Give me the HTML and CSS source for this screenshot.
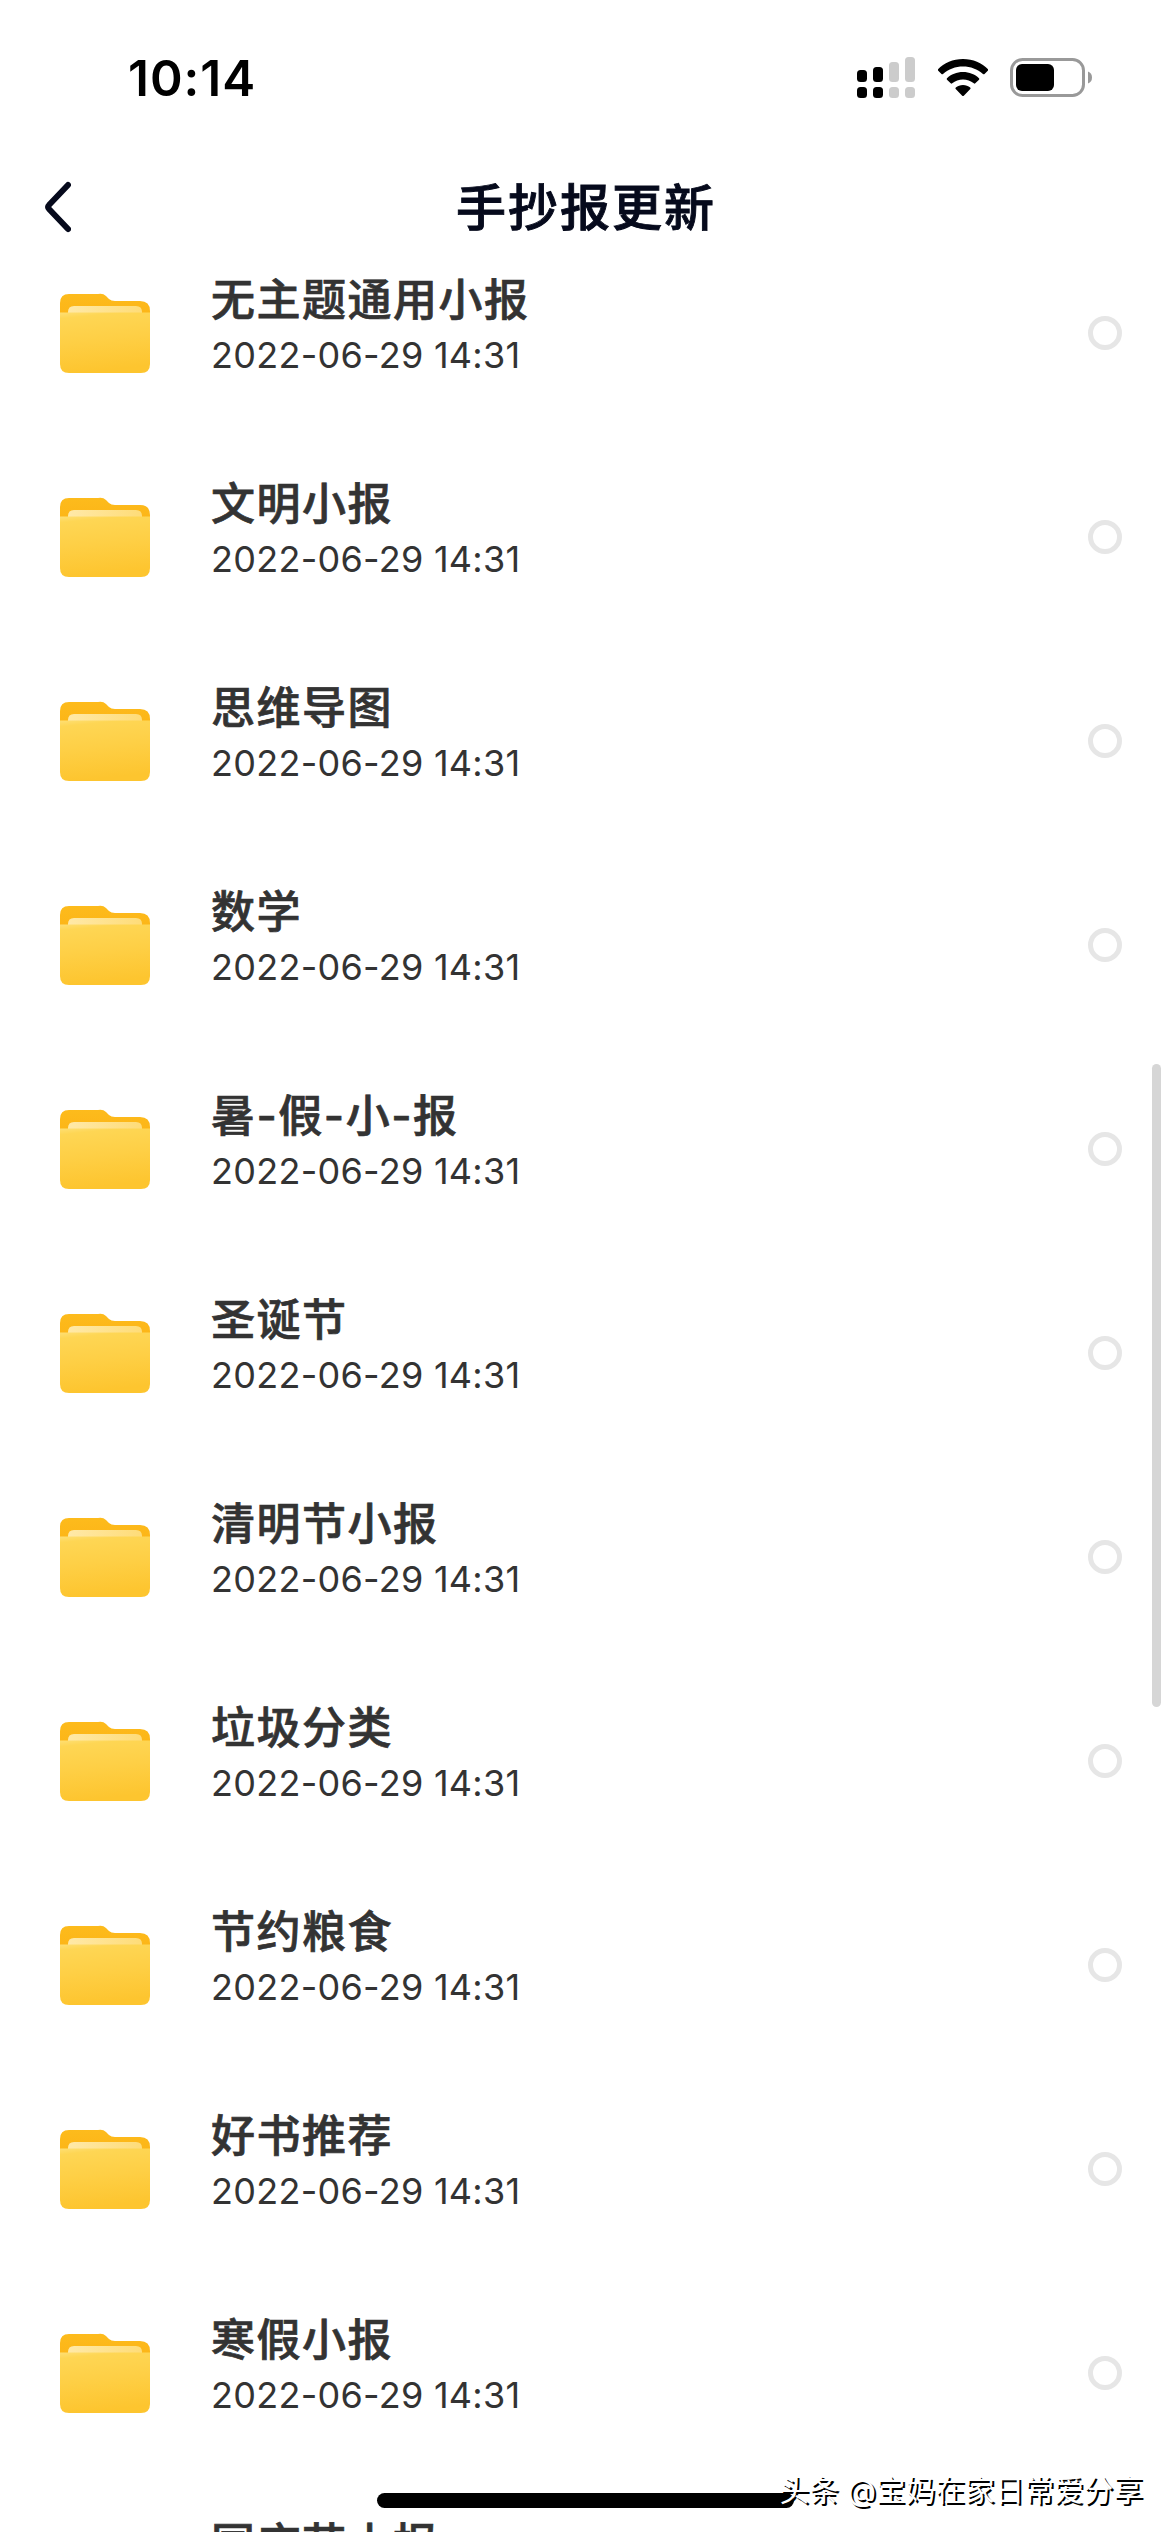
FILE: index.html
```html
<!DOCTYPE html>
<html lang="zh-cn">

<head>
    <meta charset="UTF-8">
    <meta name="viewport" content="width=device-width, initial-scale=1.0">
    <title>手抄报更新</title>
    <link rel="stylesheet" href="styles.css">
</head>

<body>

    <!-- 文件夹图标 -->
    <svg class="defs" width="0" height="0">
        <defs>
            <linearGradient id="back" x1="0" y1="0" x2="0" y2="1">
                <stop offset="0" stop-color="#fdbb1c" />
                <stop offset="1" stop-color="#fcb316" />
            </linearGradient>
            <linearGradient id="paper" x1="0" y1="0" x2="1" y2="0">
                <stop offset="0" stop-color="#ffe9a8" />
                <stop offset="1" stop-color="#fedc78" />
            </linearGradient>
            <linearGradient id="front" x1="0" y1="0" x2="0.15" y2="1">
                <stop offset="0" stop-color="#fedf74" />
                <stop offset="0.1" stop-color="#fed654" />
                <stop offset="0.5" stop-color="#fecf45" />
                <stop offset="1" stop-color="#fdc52f" />
            </linearGradient>
            <symbol id="folder" viewBox="0 0 90 80">
                <path fill="url(#back)" d="M0 30V10Q0 1 9 1H38Q43 0 46 3L49 6Q51 8 55 8H80Q90 8 90 18V30Z" />
                <path fill="url(#paper)" d="M8 30V19Q8 13 14 13H76Q82 13 82 19V30Z" />
                <path fill="url(#front)" d="M0 19.500H90V71Q90 80 81 80H9Q0 80 0 71Z" />
            </symbol>
        </defs>
    </svg>

    <div class="status">
        <span class="time">10:14</span>
        <div class="status-icons">
            <svg class="signal" width="60" height="42" viewBox="0 0 60 42">
                <rect x="0" y="13" width="10" height="12" rx="3.500" />
                <rect x="16" y="10" width="10" height="15" rx="3.500" />
                <rect x="0" y="30" width="10" height="11" rx="3.500" />
                <rect x="16" y="30" width="10" height="11" rx="3.500" />
                <g fill="#ccc">
                    <rect x="32" y="5" width="10" height="20" rx="3.500" />
                    <rect x="48" y="0" width="10" height="25" rx="3.500" />
                    <rect x="32" y="30" width="10" height="11" rx="3.500" />
                    <rect x="48" y="30" width="10" height="11" rx="3.500" />
                </g>
            </svg>
            <svg class="wifi" width="50" height="38" viewBox="0 0 50 38">
                <path d="M25 0C35 0 44 4 50 10.300Q50.500 11 50 11.600L46.500 15Q45.800 15.600 45 15C39.500 10 32.500 7.400 25 7.400S10.500 10 5 15Q4.200 15.600 3.500 15L0 11.600Q-.5 11 0 10.300C6 4 15 0 25 0Z" />
                <path d="M25 13C31.300 13 37 15.300 41 19.200Q41.700 20 41 20.700L37.300 24.300Q36.500 25 35.800 24.300C32.800 21.800 29 20.500 25 20.500S17.200 21.800 14.200 24.300Q13.500 25 12.700 24.300L9 20.700Q8.300 20 9 19.200C13 15.300 18.700 13 25 13Z" />
                <path d="M25 26C27.800 26 30.300 27 32.200 28.600Q33 29.300 32.300 30L25.800 36.700Q25 37.500 24.200 36.700L17.700 30Q17 29.300 17.800 28.600C19.700 27 22.200 26 25 26Z" />
            </svg>
            <svg class="battery" width="82" height="39" viewBox="0 0 82 39">
                <rect x="1.500" y="1.500" width="72" height="36" rx="11" fill="none" stroke="#999" stroke-width="3" />
                <rect x="6" y="6" width="38" height="27" rx="6" />
                <path fill="#999" d="M78 13.500Q82 15 82 19.500T78 25.500Z" />
            </svg>
        </div>
    </div>

    <div class="nav">
        <svg class="back" width="28" height="52" viewBox="0 0 28 52">
            <path d="M25 4L6 24Q4 26 6 28L25 48" />
        </svg>
        <h1>手抄报更新</h1>
    </div>

    <ul class="list"></ul>

    <div class="scrollbar"></div>
    <div class="home"></div>
    <div class="mark">头条 @宝妈在家日常爱分享</div>

    <script>
        var names = [
            "无主题通用小报",
            "文明小报",
            "思维导图",
            "数学",
            "暑-假-小-报",
            "圣诞节",
            "清明节小报",
            "垃圾分类",
            "节约粮食",
            "好书推荐",
            "寒假小报",
            "国庆节小报"
        ];

        // 渲染列表
        document.querySelector(".list").innerHTML = names.map(function (name) {
            return `<li>
                <svg class="folder" width="90" height="80"><use href="#folder"></use></svg>
                <div class="info">
                    <p class="name">${name}</p>
                    <p class="date">2022-06-29 14:31</p>
                </div>
                <i class="check"></i>
            </li>`;
        }).join("");
    </script>
</body>

</html>
```

FILE: styles.css
```css
* {
    padding: 0;
    margin: 0;
    list-style: none;
    box-sizing: border-box;
}

html {
    overflow: hidden;
}

body {
    width: 1170px;
    height: 2532px;
    overflow: hidden;
    position: relative;
    background-color: #fff;
    font-family: Inter, "Noto Sans CJK SC", sans-serif;
}

.defs {
    position: absolute;
}

/* 状态栏 */
.status {
    height: 154px;
    padding: 0 78px 0 128px;
    display: flex;
    justify-content: space-between;
    align-items: center;
}

.time {
    padding-top: 2px;
    font-size: 49.5px;
    font-weight: 600;
    letter-spacing: 1px;
}

.status-icons {
    padding-top: 1px;
    display: flex;
    align-items: center;
}

.wifi {
    margin-left: 21px;
}

.battery {
    margin-left: 22px;
}

/* 导航栏 */
.nav {
    height: 108px;
    padding: 0 43px;
    display: grid;
    grid-template-columns: 28px 1fr 28px;
    align-items: center;
}

.back {
    margin-top: -2px;
}

.back path {
    fill: none;
    stroke: #060a1c;
    stroke-width: 6;
    stroke-linecap: round;
}

.nav h1 {
    padding-left: 2px;
    font-size: 50px;
    font-weight: 500;
    letter-spacing: 2px;
    line-height: 70px;
    color: #060a1c;
    text-align: center;
    -webkit-text-stroke: 0.9px #060a1c;
}

/* 列表，向上滚动了一部分 */
.list {
    height: 2301px;
    margin-top: -31px;
    overflow: hidden;
}

.list li {
    height: 204px;
    padding: 0 48px 0 60px;
    display: flex;
    align-items: center;
}

.info {
    flex: 1;
    margin-left: 61px;
    padding-bottom: 16px;
    color: #333;
}

.name {
    font-size: 44px;
    font-weight: 500;
    letter-spacing: 1.5px;
    line-height: 60px;
    -webkit-text-stroke: 0.7px #333;
}

.date {
    font-size: 36px;
    letter-spacing: 0.27px;
    line-height: 50px;
}

.check {
    width: 34px;
    height: 34px;
    border: 5px solid #e6e6e6;
    border-radius: 50%;
}

.scrollbar {
    position: absolute;
    left: 1152px;
    top: 1064px;
    width: 9px;
    height: 643px;
    border-radius: 5px;
    background-color: #d6d6d6;
}

.home {
    position: absolute;
    left: 377px;
    top: 2493px;
    width: 417px;
    height: 15px;
    border-radius: 8px;
    background-color: #000;
}

/* 水印 */
.mark {
    position: absolute;
    right: 27px;
    top: 2469px;
    font-size: 29.7px;
    line-height: 42px;
    white-space: nowrap;
    color: #fff;
    text-shadow: 2px 2px 0 #000;
}
```
